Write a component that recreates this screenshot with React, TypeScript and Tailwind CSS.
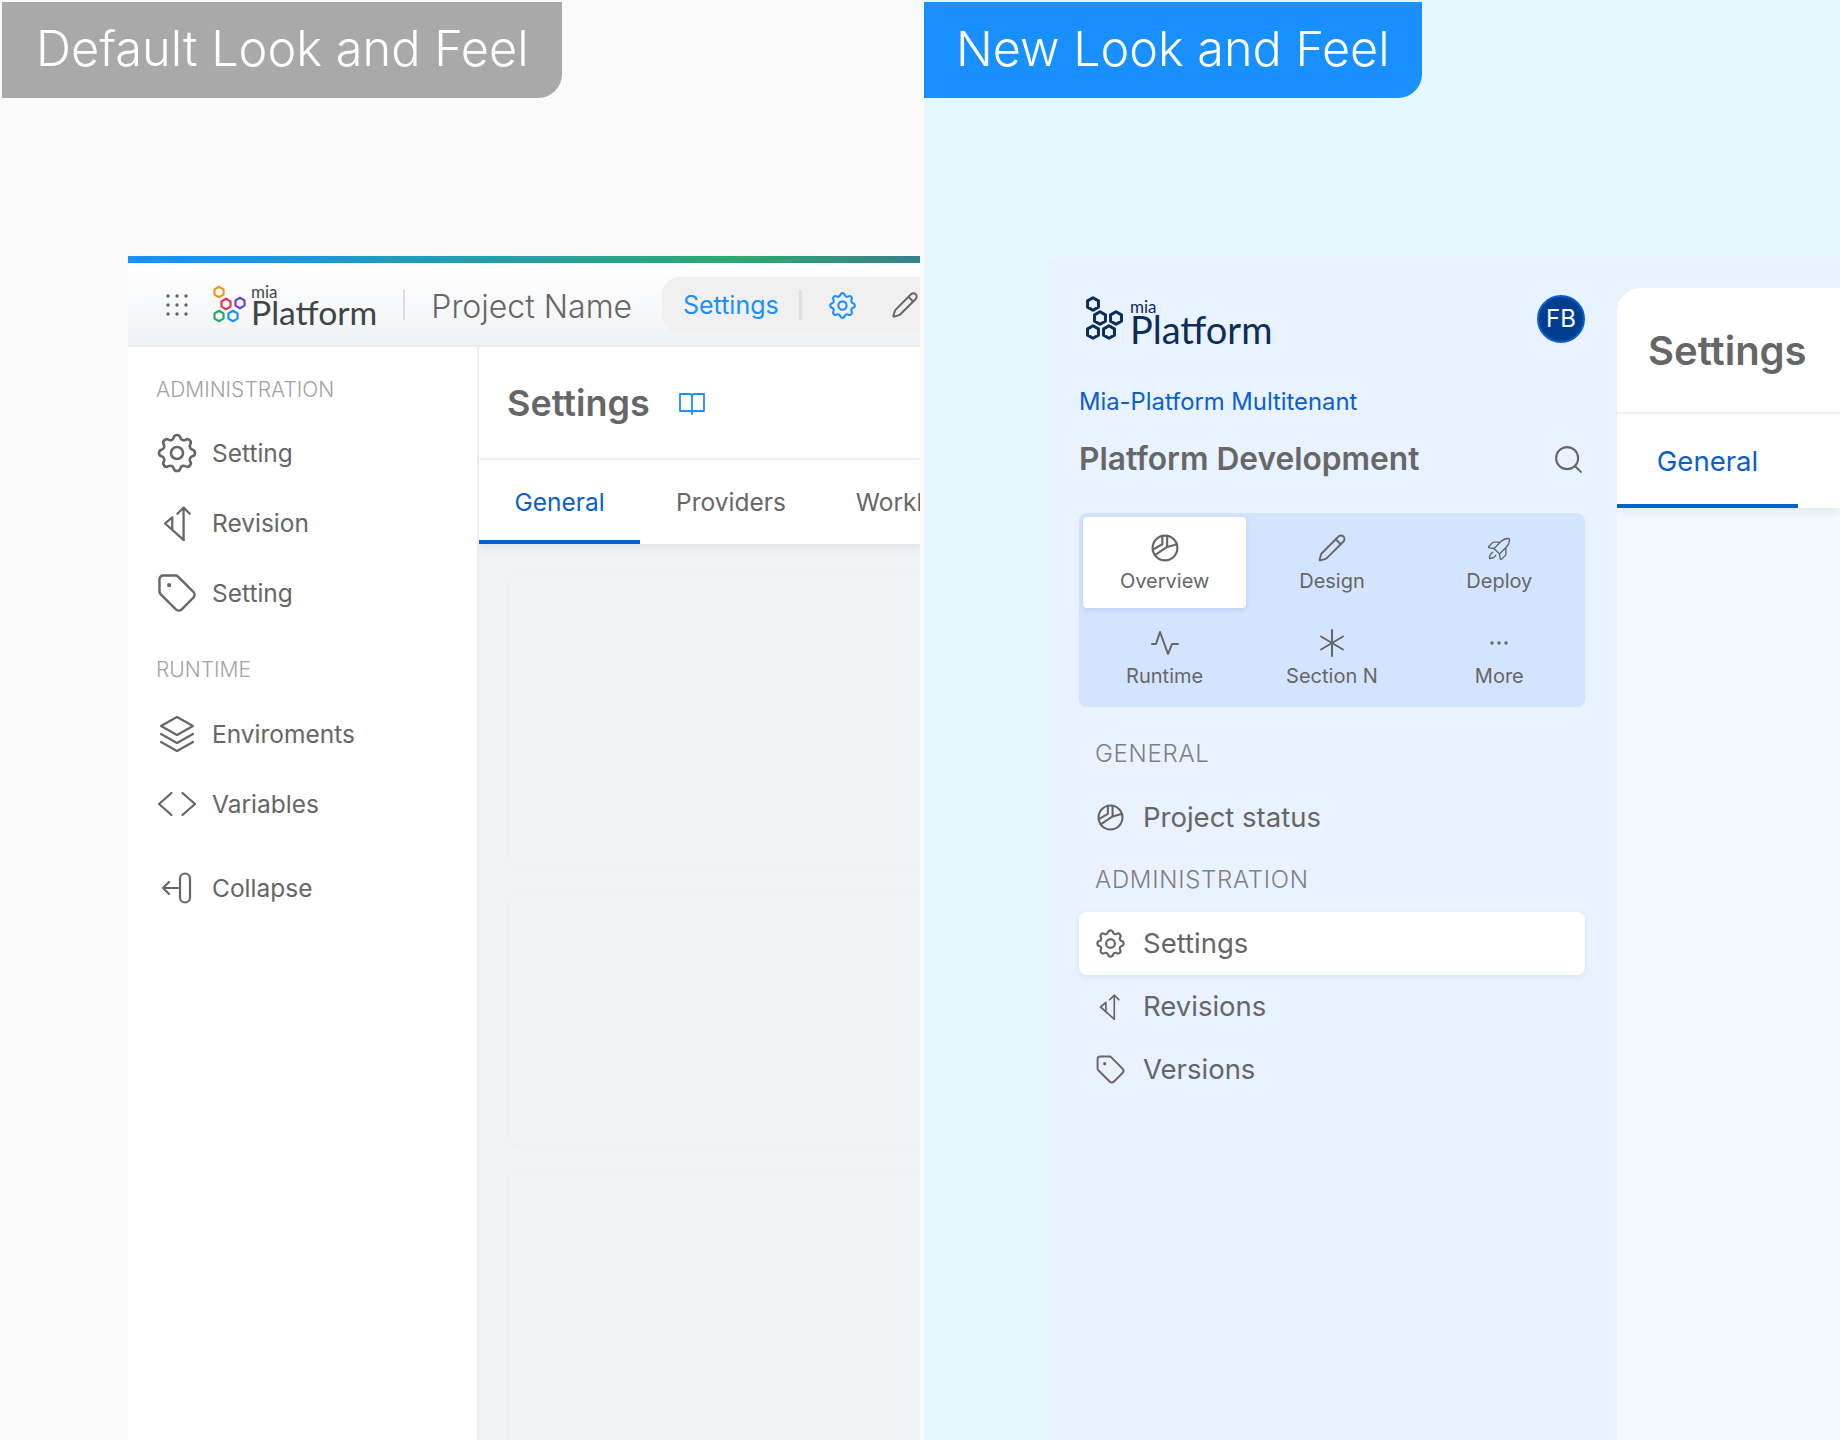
import React from "react";
import { Tag, Search, Pencil, Ellipsis } from "lucide-react";
import { TbSettings } from "react-icons/tb";
import { PiRocketLaunchLight } from "react-icons/pi";

function Hex({ cx, cy, r, color, w }: { cx: number; cy: number; r: number; color: string; w: number }) {
  const pts = [0, 60, 120, 180, 240, 300]
    .map((a) => {
      const t = ((a + 30) * Math.PI) / 180;
      return `${cx + r * Math.cos(t)},${cy + r * Math.sin(t)}`;
    })
    .join(" ");
  return <polygon points={pts} fill="none" stroke={color} strokeWidth={w} strokeLinejoin="round" />;
}

function LogoColor() {
  return (
    <svg width="36" height="42" viewBox="0 0 36 42" className="shrink-0">
      <Hex cx={7} cy={8} r={5.2} color="#f7941d" w={2.2} />
      <Hex cx={14} cy={20} r={5.2} color="#e8344e" w={2.2} />
      <Hex cx={28} cy={19} r={5.2} color="#6a3fd8" w={2.2} />
      <Hex cx={7} cy={32} r={5.2} color="#2aa866" w={2.2} />
      <Hex cx={21} cy={32} r={5.2} color="#1890ff" w={2.2} />
    </svg>
  );
}

function LogoDark() {
  return (
    <svg width="40" height="46" viewBox="0 0 40 46" className="shrink-0">
      <Hex cx={8} cy={8} r={6.300} color="#0b2d57" w={3} />
      <Hex cx={15} cy={22} r={6.300} color="#0b2d57" w={3} />
      <Hex cx={31} cy={22} r={6.300} color="#0b2d57" w={3} />
      <Hex cx={8} cy={36} r={6.300} color="#0b2d57" w={3} />
      <Hex cx={24} cy={36} r={6.300} color="#0b2d57" w={3} />
    </svg>
  );
}

function GridDots() {
  const cs = [3, 12, 21];
  return (
    <svg width="24" height="24" viewBox="0 0 24 24" fill="#636363">
      {cs.map((y) => cs.map((x) => <circle key={`${x}-${y}`} cx={x} cy={y} r="1.700" />))}
    </svg>
  );
}

function Revision({ size }: { size: number }) {
  return (
    <svg width={(size * 28) / 34} height={size} viewBox="0 0 28 34" fill="none" stroke="currentColor" strokeWidth="2.200" strokeLinecap="round" strokeLinejoin="round" className="shrink-0">
      <path d="M20 33V1.500M14 7.500l6-6 6 6" />
      <path d="M20 33L2 17l7-6v11" />
    </svg>
  );
}

function Pie({ size, stroke = 2 }: { size: number; stroke?: number }) {
  return (
    <svg width={size} height={size} viewBox="0 0 26 26" fill="none" stroke="currentColor" strokeWidth={stroke} strokeLinejoin="round" strokeLinecap="round" className="shrink-0">
      <circle cx="13" cy="13" r="11.500" />
      <path d="M15 1.700V12l9.300-2.500" />
      <path d="M15 12L3.600 19.600" />
      <path d="M10.500 1.800V9.500l-8.800 5" />
    </svg>
  );
}

function Layers({ size }: { size: number }) {
  return (
    <svg width={size} height={size} viewBox="0 0 38 38" fill="none" stroke="currentColor" strokeWidth="2.200" strokeLinejoin="round" strokeLinecap="round" className="shrink-0">
      <path d="M19 2l16 9-16 9-16-9z" />
      <path d="M3 19l16 9 16-9" />
      <path d="M3 27l16 9 16-9" />
    </svg>
  );
}

function Code({ size }: { size: number }) {
  return (
    <svg width={size} height={size} viewBox="0 0 40 40" fill="none" stroke="currentColor" strokeWidth="2.200" strokeLinecap="round" strokeLinejoin="round" className="shrink-0">
      <path d="M14.500 9L2 20l12.500 11" />
      <path d="M25.500 9L38 20 25.500 31" />
    </svg>
  );
}

function Collapse({ size }: { size: number }) {
  return (
    <svg width={size} height={size} viewBox="0 0 32 32" fill="none" stroke="currentColor" strokeWidth="2.200" strokeLinecap="round" strokeLinejoin="round" className="shrink-0">
      <path d="M17 16H2M8 10l-6 6 6 6" />
      <rect x="19" y="1.500" width="10" height="29" rx="5" />
    </svg>
  );
}

function Book({ size }: { size: number }) {
  return (
    <svg width={size} height={size} viewBox="0 0 26 24" fill="none" stroke="currentColor" strokeWidth="1.800" strokeLinejoin="round" strokeLinecap="round">
      <path d="M1 2h9c1.800 0 3 .6 3 2.200 0-1.600 1.200-2.200 3-2.200h9v17h-9.500c-1.300 0-2.500.5-2.500 1.500 0-1-1.200-1.500-2.500-1.500H1z" />
      <path d="M13 4.200V22" />
    </svg>
  );
}

function Activity() {
  return (
    <svg width="28" height="26" viewBox="0 0 28 26" fill="none" stroke="currentColor" strokeWidth="2" strokeLinecap="round" strokeLinejoin="round">
      <path d="M1 14h4L9 2l8 22 4-10h6" />
    </svg>
  );
}

function Star() {
  return (
    <svg width="26" height="28" viewBox="0 0 26 28" fill="none" stroke="currentColor" strokeWidth="2" strokeLinecap="round">
      <path d="M13 1v26M2 7.500l22 13M24 7.500L2 20.500" />
    </svg>
  );
}

function OldItem({ icon, label, className = "" }: { icon: React.ReactNode; label: string; className?: string }) {
  return (
    <div className={`flex h-[70px] items-center text-[#666666] ${className}`}>
      <div className="flex w-[40px] shrink-0 justify-center">{icon}</div>
      <span className="ml-[15px] text-[24.500px] leading-none">{label}</span>
    </div>
  );
}

function NavCell({ icon, label, active = false }: { icon: React.ReactNode; label: string; active?: boolean }) {
  return (
    <div className={`flex h-[91px] flex-col items-center pt-[16px] text-[#666666] ${active ? "rounded-[4px] bg-white shadow-[0_2px_6px_rgba(0,60,140,0.12)]" : ""}`}>
      <div className="flex h-[30px] items-center justify-center">{icon}</div>
      <span className="mt-[3px] text-[20px] leading-[30px]">{label}</span>
    </div>
  );
}

function NewItem({ icon, label, active = false }: { icon: React.ReactNode; label: string; active?: boolean }) {
  return (
    <div className={`flex h-[63px] items-center pl-[16px] text-[#666666] ${active ? "rounded-[8px] bg-white shadow-[0_2px_6px_rgba(0,60,140,0.08)]" : ""}`}>
      <div className="flex w-[30px] shrink-0 justify-center">{icon}</div>
      <span className="ml-[18px] text-[27.500px] leading-none">{label}</span>
    </div>
  );
}

export default function App() {
  return (
    <div className="grid h-[1440px] w-[1840px] grid-cols-[924px_916px] overflow-hidden font-[Inter,sans-serif]">
      {/* Default look and feel */}
      <div className="flex h-[1440px] flex-col overflow-hidden bg-[#fafafa]">
        <div className="mt-[2px] ml-[2px] flex h-[96px] w-[560px] items-center rounded-br-[24px] bg-[#a9a9a9] pb-[2px] pl-[34px] text-[48.700px] leading-none font-light text-white">
          Default Look and Feel
        </div>
        <div className="mt-[158px] ml-[128px] flex h-[1184px] w-[792px] flex-col overflow-hidden">
          <div className="h-[7px] shrink-0 bg-[linear-gradient(90deg,#1890ff_0%,#2fa76f_77%,#37808c_100%)]" />
          <div className="flex h-[84px] shrink-0 items-center border-b-2 border-[#ececec] bg-[linear-gradient(180deg,#ffffff_0%,#f0f2f5_100%)] pt-[2px]">
            <div className="ml-[37px] flex w-[24px] justify-center"><GridDots /></div>
            <div className="ml-[23px] flex items-center">
              <LogoColor />
              <div className="mt-[2px] ml-[3px] flex flex-col font-[Lato,sans-serif] text-[#3c4648]">
                <span className="text-[17px] leading-[12px]">mia</span>
                <span className="text-[33.700px] leading-[28px]">Platform</span>
              </div>
            </div>
            <div className="ml-[26px] h-[30px] w-[2px] shrink-0 bg-[#dcdcdc]" />
            <span className="mt-[3px] ml-[26px] text-[32px] leading-none font-light whitespace-nowrap text-[#666666]">Project Name</span>
            <div className="ml-auto flex h-[56px] w-[258px] shrink-0 items-center rounded-l-[18px] bg-[#f0f0f0] pl-[21px]">
              <span className="text-[25px] leading-none text-[#1890ff]">Settings</span>
              <div className="ml-[20px] h-[30px] w-[3px] shrink-0 bg-[#dedede]" />
              <TbSettings size={33} strokeWidth={1.500} className="ml-[24px] shrink-0 text-[#1890ff]" />
              <Pencil size={28} strokeWidth={1.700} className="ml-[32px] shrink-0 text-[#666666]" />
            </div>
          </div>
          <div className="flex flex-1 overflow-hidden">
            <div className="w-[351px] shrink-0 border-r-2 border-[#eceef1] bg-white pt-[30px] pl-[29px]">
              <div className="mb-[15px] -ml-[1px] text-[21px] leading-[26px] font-light text-[#a3a3a3]">ADMINISTRATION</div>
              <OldItem icon={<TbSettings size={48} strokeWidth={1.300} className="shrink-0" />} label="Setting" />
              <OldItem icon={<Revision size={35} />} label="Revision" />
              <OldItem icon={<Tag size={42} strokeWidth={1.400} className="shrink-0" />} label="Setting" />
              <div className="mt-[29px] mb-[16px] -ml-[1px] text-[21px] leading-[26px] font-light text-[#a3a3a3]">RUNTIME</div>
              <OldItem icon={<Layers size={38} />} label="Enviroments" />
              <OldItem icon={<Code size={40} />} label="Variables" />
              <OldItem icon={<Collapse size={32} />} label="Collapse" className="mt-[14px]" />
            </div>
            <div className="flex min-w-0 flex-1 flex-col overflow-hidden bg-[#f1f3f7]">
              <div className="relative z-10 shrink-0 bg-white shadow-[0_4px_10px_rgba(0,0,0,0.07)]">
                <div className="flex h-[113px] items-center border-b-2 border-[#f0f0f0] pl-[28px]">
                  <span className="text-[36px] leading-none font-semibold text-[#666666]">Settings</span>
                  <div className="mt-[2px] ml-[29px] flex text-[#1890ff]"><Book size={26} /></div>
                </div>
                <div className="flex h-[84px] text-[24.500px] leading-none whitespace-nowrap">
                  <div className="flex w-[161px] shrink-0 items-center justify-center border-b-4 border-[#0a5fd0] pt-[4px] text-[#0a5fd0]">General</div>
                  <div className="flex shrink-0 items-center border-b-4 border-transparent pr-[34px] pl-[36px] pt-[4px] text-[#666666]">Providers</div>
                  <div className="flex shrink-0 items-center border-b-4 border-transparent px-[36px] pt-[4px] text-[#666666]">Workload</div>
                </div>
              </div>
              <div className="mt-[29px] ml-[28px] h-[295px] w-[500px] shrink-0 rounded-[12px] border-2 border-[#f0f1f2]" />
              <div className="mt-[25px] ml-[28px] h-[254px] w-[500px] shrink-0 rounded-[12px] border-2 border-[#f0f1f2]" />
              <div className="mt-[24px] ml-[28px] h-[400px] w-[500px] shrink-0 rounded-[12px] border-2 border-[#f0f1f2]" />
            </div>
          </div>
        </div>
      </div>

      {/* New look and feel */}
      <div className="flex h-[1440px] flex-col overflow-hidden bg-[#e6f7ff]">
        <div className="mt-[2px] flex h-[96px] w-[498px] items-center rounded-br-[24px] bg-[#1890ff] pb-[2px] pl-[32px] text-[48.500px] leading-none font-light text-white">
          New Look and Feel
        </div>
        <div className="mt-[159px] ml-[124px] flex h-[1183px] w-[792px] rounded-tl-[8px] bg-[#e9f2ff]">
          <div className="w-[569px] shrink-0 pt-[38px] pl-[31px]">
            <div className="flex h-[48px] w-[506px] items-center justify-between">
              <div className="ml-[6px] flex h-[48px] items-center">
                <LogoDark />
                <div className="mt-[8px] ml-[5px] flex flex-col font-[Lato,sans-serif] text-[#0b2d57]">
                  <span className="text-[17px] leading-[12px]">mia</span>
                  <span className="text-[38px] leading-[32px]">Platform</span>
                </div>
              </div>
              <div className="flex h-[48px] w-[48px] items-center justify-center rounded-full border-2 border-[#0a5fd0] bg-[#003f8f] text-[24px] leading-none text-white">FB</div>
            </div>
            <div className="mt-[44px] text-[23.800px] leading-[30px] text-[#0a5fd0]">Mia-Platform Multitenant</div>
            <div className="mt-[22px] flex w-[506px] items-center justify-between">
              <span className="text-[31.700px] leading-[40px] font-semibold text-[#676767]">Platform Development</span>
              <Search size={33} strokeWidth={1.500} className="text-[#666666]" />
            </div>
            <div className="mt-[34px] grid w-[506px] grid-cols-3 gap-[4px] rounded-[8px] bg-[#d3e5fe] p-[4px]">
              <NavCell active icon={<Pie size={28} />} label="Overview" />
              <NavCell icon={<Pencil size={30} strokeWidth={1.500} />} label="Design" />
              <NavCell icon={<PiRocketLaunchLight size={29} />} label="Deploy" />
              <NavCell icon={<Activity />} label="Runtime" />
              <NavCell icon={<Star />} label="Section N" />
              <NavCell icon={<Ellipsis size={24} strokeWidth={1.500} />} label="More" />
            </div>
            <div className="w-[506px]">
              <div className="mt-[33px] pl-[16px] text-[24px] leading-[28px] font-light tracking-[0.03em] text-[#7f7f7f]">GENERAL</div>
              <div className="mt-[18px]"><NewItem icon={<Pie size={27} />} label="Project status" /></div>
              <div className="mt-[17px] mb-[18px] pl-[16px] text-[24px] leading-[28px] font-light tracking-[0.03em] text-[#7f7f7f]">ADMINISTRATION</div>
              <NewItem active icon={<TbSettings size={35} strokeWidth={1.500} className="shrink-0" />} label="Settings" />
              <NewItem icon={<Revision size={26} />} label="Revisions" />
              <NewItem icon={<Tag size={31} strokeWidth={1.500} className="shrink-0" />} label="Versions" />
            </div>
          </div>
          <div className="mt-[31px] flex min-w-0 flex-1 flex-col overflow-hidden rounded-tl-[24px] bg-[#f4f8ff]">
            <div className="shrink-0 bg-white shadow-[0_4px_10px_rgba(0,0,0,0.07)]">
              <div className="flex h-[126px] items-center border-b-2 border-[#f0f0f0] pt-[2px] pl-[31px] text-[40px] leading-none font-semibold text-[#666666]">Settings</div>
              <div className="flex h-[94px] text-[27.500px] leading-none whitespace-nowrap">
                <div className="flex w-[181px] shrink-0 items-center justify-center border-b-4 border-[#0a5fd0] pt-[5px] text-[#0a5fd0]">General</div>
                <div className="flex items-center pt-[5px] pl-[40px] text-[#666666]">Providers</div>
              </div>
            </div>
          </div>
        </div>
      </div>
    </div>
  );
}
